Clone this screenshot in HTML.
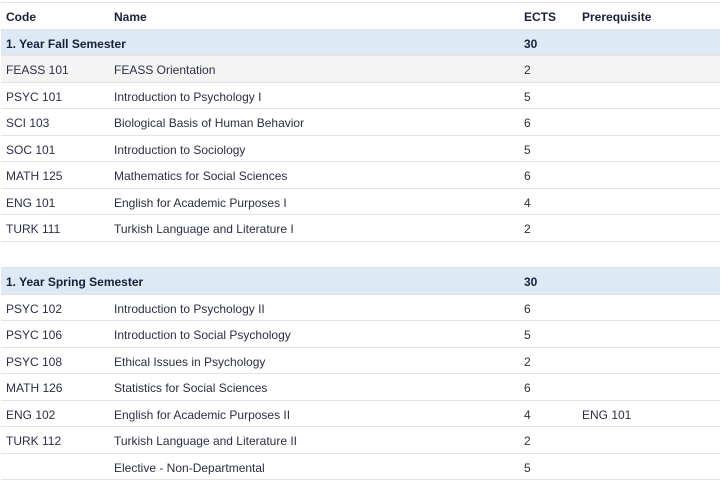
<!DOCTYPE html>
<html><head><style>
body{margin:0;background:#fff;font-family:"Liberation Sans",sans-serif;font-size:12px;color:#2a2f45;}
.w{position:absolute;left:1px;top:2px;width:719px;border-top:1px solid #e3e3e3;}
.r{height:25.5px;border-bottom:1px solid #e3e3e3;position:relative;}
.r span{position:absolute;top:7px;white-space:nowrap}
.a{left:5px}.b{left:113px}.c{left:523px}.d{left:581px}
.h{font-weight:bold;color:#1a1f3a}
.s{background:#dde9f5;font-weight:bold;color:#1a1f3a}
.g{background:#f4f4f4}
.gap{height:26.5px;}
</style></head><body><div class="w">
<div class="r h"><span class="a">Code</span><span class="b">Name</span><span class="c">ECTS</span><span class="d">Prerequisite</span></div>
<div class="r s"><span class="a">1. Year Fall Semester</span><span class="c">30</span></div>
<div class="r g"><span class="a">FEASS 101</span><span class="b">FEASS Orientation</span><span class="c">2</span></div>
<div class="r"><span class="a">PSYC 101</span><span class="b">Introduction to Psychology I</span><span class="c">5</span></div>
<div class="r"><span class="a">SCI 103</span><span class="b">Biological Basis of Human Behavior</span><span class="c">6</span></div>
<div class="r"><span class="a">SOC 101</span><span class="b">Introduction to Sociology</span><span class="c">5</span></div>
<div class="r"><span class="a">MATH 125</span><span class="b">Mathematics for Social Sciences</span><span class="c">6</span></div>
<div class="r"><span class="a">ENG 101</span><span class="b">English for Academic Purposes I</span><span class="c">4</span></div>
<div class="r"><span class="a">TURK 111</span><span class="b">Turkish Language and Literature I</span><span class="c">2</span></div>
<div class="r" style="height:25.5px"></div>
<div class="r s"><span class="a">1. Year Spring Semester</span><span class="c">30</span></div>
<div class="r"><span class="a">PSYC 102</span><span class="b">Introduction to Psychology II</span><span class="c">6</span></div>
<div class="r"><span class="a">PSYC 106</span><span class="b">Introduction to Social Psychology</span><span class="c">5</span></div>
<div class="r"><span class="a">PSYC 108</span><span class="b">Ethical Issues in Psychology</span><span class="c">2</span></div>
<div class="r"><span class="a">MATH 126</span><span class="b">Statistics for Social Sciences</span><span class="c">6</span></div>
<div class="r"><span class="a">ENG 102</span><span class="b">English for Academic Purposes II</span><span class="c">4</span><span class="d">ENG 101</span></div>
<div class="r"><span class="a">TURK 112</span><span class="b">Turkish Language and Literature II</span><span class="c">2</span></div>
<div class="r"><span class="b">Elective - Non-Departmental</span><span class="c">5</span></div>
</div></body></html>
